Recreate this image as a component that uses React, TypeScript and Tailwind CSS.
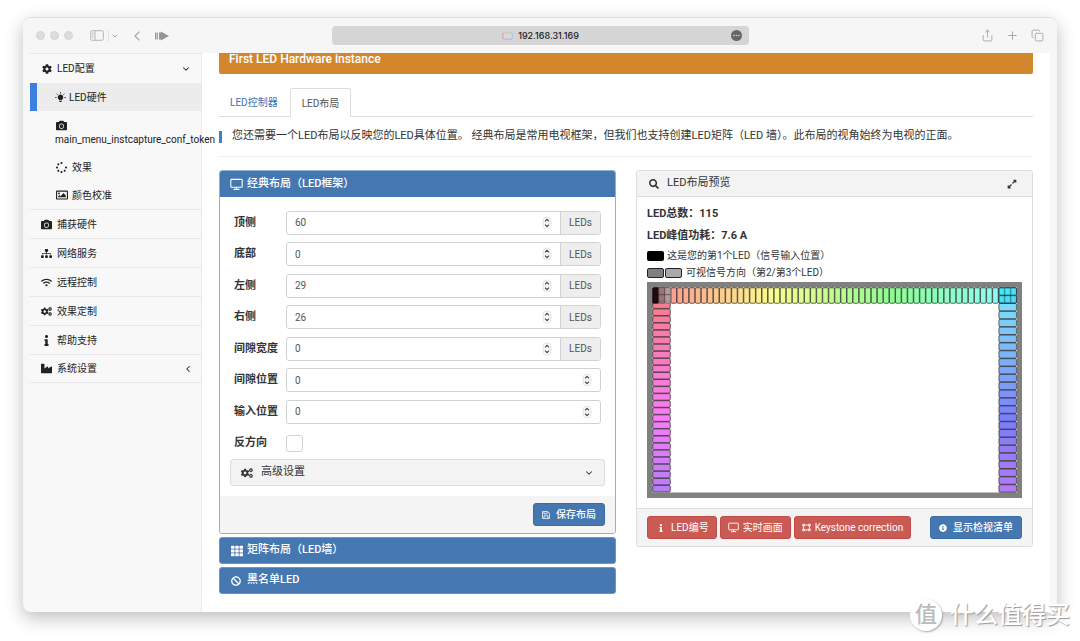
import React from 'react'
import {
  FaBan,
  FaCamera,
  FaCog,
  FaCogs,
  FaExpandAlt,
  FaIndustry,
  FaInfo,
  FaInfoCircle,
  FaRegImage,
  FaSearch,
  FaSitemap,
  FaSpinner,
  FaTh,
  FaVectorSquare,
  FaWifi,
} from 'react-icons/fa'
import { ChevronDown, ChevronLeft, Copy, Plus, Share } from 'lucide-react'

type IconProps = { className?: string }

function MonitorIcon({ className }: IconProps) {
  return (
    <svg viewBox="0 0 24 22" className={className} fill="none" stroke="currentColor" strokeWidth="2" aria-hidden="true">
      <rect x="1.5" y="1.5" width="21" height="14.5" rx="1.5" />
      <path d="M12 16v3M6.500 20h11" />
    </svg>
  )
}

function BulbIcon({ className }: IconProps) {
  return (
    <svg viewBox="0 0 24 24" className={className} fill="currentColor" aria-hidden="true">
      <path d="M12 5.500a6 6 0 0 0-3.500 10.900V18h7v-1.600A6 6 0 0 0 12 5.500zM9.500 19.500h5V22h-5z" />
      <path d="M12 .5v2.800M.5 12h3M20.500 12h3M3.500 3.800l2.300 2.200M20.500 3.800 18.200 6" stroke="currentColor" strokeWidth="2" />
    </svg>
  )
}

function FloppyIcon({ className }: IconProps) {
  return (
    <svg viewBox="0 0 14 14" className={className} fill="none" stroke="currentColor" strokeWidth="1.400" aria-hidden="true">
      <path d="M1 1h9l3 3v9H1z" />
      <path d="M3.500 13V8.500h7V13M3.500 1v4h5.500V1" />
    </svg>
  )
}

// four corner handles joined by lines
function CornersIcon({ className }: IconProps) {
  return (
    <svg viewBox="0 0 14 12" className={className} fill="none" stroke="currentColor" strokeWidth="1.400" aria-hidden="true">
      <path d="M1 1h3v2.500H1zM10 1h3v2.500h-3zM1 8.500h3V11H1zM10 8.500h3V11h-3z" />
      <path d="M4 2.200h6M4 9.800h6M2.500 3.500v5M11.500 3.500v5" />
    </svg>
  )
}

function StepperIcon() {
  return (
    <svg viewBox="0 0 10 14" className="h-3.5 w-2.5 shrink-0" fill="none" aria-hidden="true">
      <rect x="1" y="1" width="8" height="12" rx="4" stroke="#e3e3e3" />
      <path d="M1 7h8" stroke="#e3e3e3" />
      <path d="M3 5.300 5 3.300l2 2M3 8.700l2 2 2-2" stroke="#444" strokeWidth="1.200" />
    </svg>
  )
}

function Toolbar() {
  return (
    <div className="grid h-[35px] grid-cols-[1fr_417px_1fr] items-center bg-[#f6f6f6] text-[#a9a9a9]">
      <div className="flex items-center pl-[13px]">
        <div className="flex gap-[5px]">
          <span className="size-[9px] rounded-full border border-[#d4d4d4] bg-[#dcdcdc]" />
          <span className="size-[9px] rounded-full border border-[#d4d4d4] bg-[#dcdcdc]" />
          <span className="size-[9px] rounded-full border border-[#d4d4d4] bg-[#dcdcdc]" />
        </div>
        <svg viewBox="0 0 14 11" className="ml-[17px] h-[11px] w-3.5" fill="none" stroke="#b5b5b5" aria-hidden="true">
          <rect x=".7" y=".7" width="12.600" height="9.600" rx="1.500" />
          <path d="M5 1v9M2 3h1.500M2 5h1.500M2 7h1.500" />
        </svg>
        <span className="ml-1 h-3 w-px bg-[#e2e2e2]" />
        <ChevronDown className="ml-0.5 size-2" strokeWidth={3} />
        <ChevronLeft className="ml-2.5 size-4" strokeWidth={1.75} />
        <svg viewBox="0 0 14 10" className="ml-2.5 h-2.5 w-3.5" fill="#969696" aria-hidden="true">
          <path d="M0 1.500h1.500v7H0zM2.200 1.500h.8v7h-.8zM4 1.500h2v7H4zM6 .5 14 5 6 9.500z" />
        </svg>
      </div>
      <div className="flex h-[19px] items-center rounded bg-[#d5d5d5] px-[7px]">
        <div className="flex flex-1 items-center justify-center gap-[5px] pl-3 font-['Inter',sans-serif] text-[9px] font-medium text-[#222]">
          <svg viewBox="0 0 11 8" className="h-2 w-[11px]" fill="none" aria-hidden="true">
            <path d="M1 7V1" stroke="#e57ad6" />
            <path d="M1 1h5" stroke="#e8b58c" />
            <path d="M6 1h4" stroke="#92dc9b" />
            <path d="M10 1v6" stroke="#86c4ee" />
            <path d="M1 7h9" stroke="#b4a1e8" />
            <path d="M1.500 1.500h8v5h-8z" fill="#d9d9d9" />
          </svg>
          <span>192.168.31.169</span>
        </div>
        <svg viewBox="0 0 11 11" className="size-[11px]" aria-hidden="true">
          <circle cx="5.500" cy="5.500" r="5.500" fill="#666" />
          <g fill="#ddd">
            <circle cx="3" cy="5.500" r=".8" />
            <circle cx="5.500" cy="5.500" r=".8" />
            <circle cx="8" cy="5.500" r=".8" />
          </g>
        </svg>
      </div>
      <div className="flex items-center justify-end gap-3 pr-[13px]">
        <Share className="size-[13px]" strokeWidth={1.75} />
        <Plus className="size-[13px]" strokeWidth={2} />
        <Copy className="size-[13px]" strokeWidth={1.75} />
      </div>
    </div>
  )
}

const menu = [
  { label: '捕获硬件', icon: FaCamera },
  { label: '网络服务', icon: FaSitemap },
  { label: '远程控制', icon: FaWifi },
  { label: '效果定制', icon: FaCogs },
  { label: '帮助支持', icon: FaInfo },
  { label: '系统设置', icon: FaIndustry, closed: true },
]

function Sidebar() {
  return (
    <nav className="relative z-10 w-[172px] shrink-0 border-r border-[#e9e9e9] bg-[#f8f8f8] text-[10px] text-[#222]">
      <a href="#led" className="flex h-[30px] items-center border-t border-[#e7e7e7] pr-2.5 pl-3">
        <FaCog className="mr-[5px] size-[10px]" />
        <span className="flex-1">LED配置</span>
        <ChevronDown className="size-2.5" strokeWidth={2.5} />
      </a>
      <a href="#hardware" className="flex h-7 items-center gap-[3px] border-l-[7px] border-[#3b7fe0] bg-[#ececec] pl-[18px]">
        <BulbIcon className="size-[11px]" />
        LED硬件
      </a>
      <a href="#instcapture" className="flex h-[42px] flex-col justify-center pl-[25px] leading-[14px]">
        <FaCamera className="my-0.5 ml-px size-[11px]" />
        main_menu_instcapture_conf_token
      </a>
      <a href="#effects" className="flex h-7 items-center gap-[5px] pl-[26px]">
        <FaSpinner className="size-[11px]" />
        效果
      </a>
      <a href="#color" className="flex h-7 items-center gap-1 pl-[26px]">
        <FaRegImage className="size-3" />
        颜色校准
      </a>
      {menu.map(({ label, icon: Icon, closed }) => (
        <a key={label} href="#menu" className="flex h-[29px] items-center border-t border-[#e7e7e7] pr-2 pl-[11px] last:border-b">
          <Icon className="mr-[5px] size-[11px]" />
          <span className="flex-1">{label}</span>
          {closed && <ChevronLeft className="size-2.5" strokeWidth={2.5} />}
        </a>
      ))}
    </nav>
  )
}

const fields = [
  { id: 'top', label: '顶侧', value: 60, unit: true },
  { id: 'bottom', label: '底部', value: 0, unit: true },
  { id: 'left', label: '左侧', value: 29, unit: true },
  { id: 'right', label: '右侧', value: 26, unit: true },
  { id: 'glength', label: '间隙宽度', value: 0, unit: true },
  { id: 'gpos', label: '间隙位置', value: 0, unit: false },
  { id: 'position', label: '输入位置', value: 0, unit: false },
]

function ClassicPanel() {
  return (
    <section className="overflow-hidden rounded-[3px] border border-[#8fb0d6]">
      <h2 className="flex h-[26px] items-center gap-1 bg-[#4577b1] px-2.5 text-[11px] font-medium text-white">
        <MonitorIcon className="size-[13px]" />
        经典布局（LED框架）
      </h2>
      <div className="px-2.5 py-2.5">
        <div className="grid h-[252px] auto-rows-fr items-center px-1">
          {fields.map((f) => (
            <div key={f.id} className="flex items-center">
              <label htmlFor={f.id} className="w-[52px] shrink-0 text-[11px] font-bold text-[#333]">
                {f.label}
              </label>
              <div className="flex h-6 flex-1 overflow-hidden rounded-[3px] border border-[#d2d2d2] text-[10px] text-[#555]">
                <div className="flex flex-1 items-center pr-2">
                  <input
                    id={f.id}
                    type="number"
                    defaultValue={f.value}
                    className="w-0 flex-1 [appearance:textfield] px-2 outline-none"
                  />
                  <StepperIcon />
                </div>
                {f.unit && (
                  <span className="flex w-10 items-center justify-center border-l border-[#d2d2d2] bg-[#eee]">LEDs</span>
                )}
              </div>
            </div>
          ))}
          <div className="flex items-center">
            <label htmlFor="reverse" className="w-[52px] text-[11px] font-bold text-[#333]">
              反方向
            </label>
            <input id="reverse" type="checkbox" className="size-[17px] appearance-none rounded-[3px] border border-[#d2d2d2] bg-white" />
          </div>
        </div>
        <button className="flex h-[27px] w-full items-center rounded-[3px] border border-[#ddd] bg-[#f3f3f3] px-2.5 text-[11px] text-[#333]">
          <FaCogs className="mr-2 size-3" />
          <span className="flex-1 text-left">高级设置</span>
          <ChevronDown className="size-2.5" strokeWidth={2.5} />
        </button>
      </div>
      <div className="flex justify-end bg-[#f4f4f4] px-2.5 py-[7px]">
        <button className="flex h-[23px] items-center gap-1.5 rounded-[3px] border border-[#3b6ca8] bg-[#4577b1] px-2 text-[10px] font-medium text-white">
          <FloppyIcon className="size-2" />
          保存布局
        </button>
      </div>
    </section>
  )
}

// index 0 sits top left and the strip runs clockwise
const ledCount = 115
const ledColor = (i: number) => `hsla(${(i * 360) / ledCount}, ${i < 60 ? 95 : 90}%, 50%, ${i < 60 ? 0.45 : 0.54})`

const topLeds = Array.from({ length: 60 }, (_, i) => ({ x: 5.5 + i * 6.07, y: 5.5, w: 6.07, h: 16, i }))
const rightLeds = Array.from({ length: 26 }, (_, i) => ({ x: 351.7, y: 5.5 + i * 7.88, w: 18, h: 7.88, i: 60 + i }))
const leftLeds = Array.from({ length: 29 }, (_, i) => ({ x: 5.5, y: 5.5 + (28 - i) * 7.06, w: 18, h: 7.06, i: 86 + i }))
const firstLeds = ['rgba(0,0,0,0.85)', 'rgba(128,128,128,0.8)', 'rgba(169,169,169,0.8)']

function LedPreview() {
  return (
    <svg viewBox="0 0 375 216" className="block w-full" role="img" aria-label="LED布局预览">
      <rect width="375" height="216" fill="#808080" />
      <rect x="5.500" y="5.500" width="364.500" height="205" fill="#fff" />
      {[...topLeds, ...rightLeds, ...leftLeds].map((led) => (
        <rect
          key={led.i}
          x={led.x + 0.25}
          y={led.y + 0.25}
          width={led.w - 0.5}
          height={led.h - 0.5}
          rx="1"
          fill={ledColor(led.i)}
          stroke="#222"
          strokeOpacity="0.75"
          strokeWidth="0.9"
        />
      ))}
      {firstLeds.map((fill, i) => (
        <rect key={fill} x={5.5 + i * 6.07} y="5.500" width="6.070" height="16" rx="1" fill={fill} />
      ))}
      <path d="M11.600 5.500v16M17.700 5.500v16M5.500 12.600h18" stroke="#222" strokeOpacity="0.4" />
    </svg>
  )
}

function PreviewPanel() {
  const danger =
    'flex h-[23px] items-center gap-1 rounded-[3px] border border-[#c04b47] bg-[#ca5a54] px-[7px] text-[10px] text-white'
  return (
    <section className="overflow-hidden rounded-[3px] border border-[#ddd]">
      <div className="flex h-[26px] items-center border-b border-[#ddd] bg-[#f3f3f3] pr-[15px] pl-3 text-[11px] text-[#333]">
        <FaSearch className="mr-2 size-2.5" />
        <h2 className="flex-1">LED布局预览</h2>
        <FaExpandAlt className="size-2.5" />
      </div>
      <div className="px-2.5 pt-1.5 pb-2.5 text-[10px] text-[#333]">
        <p className="text-[11px] leading-[22px] font-bold">LED总数：115</p>
        <p className="text-[11px] leading-[21px] font-bold">LED峰值功耗：7.6 A</p>
        <p className="flex h-[18px] items-end gap-[3px] leading-4">
          <span className="mb-[3px] h-2.5 w-[17px] rounded-[2px] bg-black" />
          这是您的第1个LED（信号输入位置）
        </p>
        <p className="flex h-[18px] items-center gap-px leading-4">
          <span className="h-2.5 w-[17px] rounded-[2px] border border-[#222] bg-[#808080]" />
          <span className="mr-[3px] h-2.5 w-[17px] rounded-[2px] border border-[#222] bg-[#a9a9a9]" />
          可视信号方向（第2/第3个LED）
        </p>
        <LedPreview />
      </div>
      <div className="flex items-center gap-[3px] border-t border-[#ddd] bg-[#f4f4f4] px-2.5 py-[7px]">
        <button className={danger}>
          <FaInfo className="mx-0.5 size-2" />
          LED编号
        </button>
        <button className={danger}>
          <MonitorIcon className="size-[11px]" />
          实时画面
        </button>
        <button className={danger}>
          <CornersIcon className="size-[9px]" />
          Keystone correction
        </button>
        <button className="ml-auto flex h-[23px] items-center gap-1.5 rounded-[3px] border border-[#3b6ca8] bg-[#4577b1] px-2 text-[10px] font-medium text-white">
          <FaInfoCircle className="size-2" />
          显示检视清单
        </button>
      </div>
    </section>
  )
}

function CollapsedPanel({ title, children }: { title: string; children: React.ReactNode }) {
  return (
    <button className="flex h-[27px] w-full items-center rounded-[3px] border border-[#6d95c4] bg-[#4577b1] px-[11px] text-[11px] font-medium text-white">
      <span className="flex w-4 items-center">{children}</span>
      {title}
    </button>
  )
}

function Content() {
  return (
    <main className="min-w-0 flex-1 bg-white px-[17px] pb-[18px]">
      <div className="rounded-b-[2px] bg-[#d2872f] pb-2 pl-2.5 text-xs leading-[13px] font-medium text-white">First LED Hardware instance</div>
      <div className="mt-3.5 flex h-[29px] border-b border-[#ddd] text-[10px]">
        <a href="#controller" className="flex items-center px-[11px] text-[#3d74b3]">
          LED控制器
        </a>
        <a href="#layout" className="-mb-px ml-px flex items-center rounded-t-[3px] border border-b-0 border-[#ddd] bg-white px-[11px] text-[#555]">
          LED布局
        </a>
      </div>
      <div className="flex h-10 items-center gap-2.5 border-b border-[#eee] text-[11px] text-[#333]">
        <span className="h-3 w-[3px] shrink-0 bg-[#3c82c9]" />
        <p>您还需要一个LED布局以反映您的LED具体位置。 经典布局是常用电视框架，但我们也支持创建LED矩阵（LED 墙）。此布局的视角始终为电视的正面。</p>
      </div>
      <div className="mt-[13px] grid grid-cols-2 items-start gap-5">
        <div className="flex flex-col gap-[3px]">
          <ClassicPanel />
          <CollapsedPanel title="矩阵布局（LED墙）">
            <FaTh className="size-3" />
          </CollapsedPanel>
          <CollapsedPanel title="黑名单LED">
            <FaBan className="size-2.5" />
          </CollapsedPanel>
        </div>
        <PreviewPanel />
      </div>
    </main>
  )
}

export default function App() {
  return (
    <div className="relative overflow-hidden bg-white px-[23px] pt-[17px] pb-[29px] font-['Roboto','Noto_Sans_CJK_SC',sans-serif]">
      <div className="overflow-hidden rounded-lg border-t border-[#e0e0e0] bg-[#f7f7f7] shadow-[0_6px_18px_rgba(0,0,0,0.26)]">
        <Toolbar />
        <div className="flex px-[7px]">
          <Sidebar />
          <Content />
        </div>
      </div>
      <div className="absolute right-2.5 bottom-2.5 flex items-center gap-2 text-2xl font-medium text-white [text-shadow:1px_1px_1px_#999]">
        <span className="flex size-8 items-center justify-center rounded-full bg-white text-[22px] text-[#bbb] shadow-[1px_1px_2px_#aaa] [text-shadow:none]">值</span>
        <span>什么值得买</span>
      </div>
    </div>
  )
}
